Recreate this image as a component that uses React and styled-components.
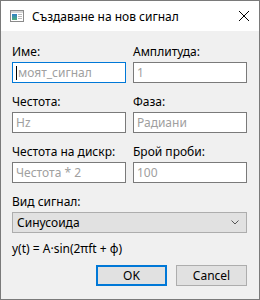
import styled, { createGlobalStyle } from 'styled-components';

const Global = createGlobalStyle`
  html, body {
    margin: 0;
    padding: 0;
    background: #f0f0f0;
  }
  * { box-sizing: border-box; }
`;

const Window = styled.div`
  width: 260px;
  height: 300px;
  display: flex;
  flex-direction: column;
  background: #f0f0f0;
  border: 1px solid #7a7a7a;
  font-family: "Noto Sans", "Open Sans", sans-serif;
  font-size: 12px;
  color: #000;
`;

const TitleBar = styled.div`
  height: 30px;
  flex: none;
  display: flex;
  align-items: center;
  background: #fff;
  padding: 0 9px 0 9px;
`;

const Title = styled.div`
  flex: 1;
  margin-left: 8px;
  font-size: 12px;
`;

const Body = styled.div`
  padding: 13px 12px 0 11px;
  display: flex;
  flex-direction: column;
`;

const Grid = styled.div`
  display: grid;
  grid-template-columns: 1fr 1fr;
  column-gap: 7px;
  row-gap: 11px;
`;

const Field = styled.div`
  display: flex;
  flex-direction: column;
  gap: 2px;
  grid-column: ${(p) => (p.$wide ? '1 / span 2' : 'auto')};
`;

const Label = styled.div`
  line-height: 16px;
  height: 16px;
  white-space: nowrap;
`;

const Input = styled.div`
  height: 21px;
  background: #fff;
  border: 1px solid ${(p) => (p.$focus ? '#0078d7' : '#7a7a7a')};
  display: flex;
  align-items: center;
  padding-left: 3px;
  color: #a0a0a0;
`;

const Caret = styled.span`
  width: 1px;
  height: 14px;
  background: #000;
  margin-right: 1px;
`;

const Combo = styled.div`
  height: 21px;
  background: #e1e1e1;
  border: 1px solid #adadad;
  display: flex;
  align-items: center;
  justify-content: space-between;
  padding: 0 7px 0 4px;
`;

const Formula = styled.div`
  margin-top: 8px;
  line-height: 16px;
`;

const Buttons = styled.div`
  margin-top: 8px;
  display: flex;
  justify-content: flex-end;
  gap: 9px;
`;

const Button = styled.div`
  width: 71px;
  height: 21px;
  display: flex;
  align-items: center;
  justify-content: center;
  background: #e1e1e1;
  border: ${(p) => (p.$default ? '2px solid #0078d7' : '1px solid #adadad')};
`;

const WinIcon = () => (
  <svg width="14" height="12" viewBox="0 0 14 12">
    <defs>
      <linearGradient id="g" x1="0" y1="0" x2="0" y2="1">
        <stop offset="0" stopColor="#2f7fc8" />
        <stop offset="1" stopColor="#4fb07a" />
      </linearGradient>
    </defs>
    <rect x="0.5" y="0.5" width="13" height="11" fill="#fff" stroke="#8a8a8a" />
    <rect x="1" y="1" width="12" height="2" fill="#d6d6d6" />
    <rect x="2" y="4" width="5" height="6" fill="url(#g)" />
    <rect x="8" y="4" width="4" height="1" fill="#bbb" />
    <rect x="8" y="6" width="4" height="1" fill="#bbb" />
    <rect x="8" y="8" width="4" height="1" fill="#bbb" />
  </svg>
);

const CloseIcon = () => (
  <svg width="12" height="12" viewBox="0 0 12 12">
    <path d="M1 1 L11 11 M11 1 L1 11" stroke="#000" strokeWidth="1" />
  </svg>
);

const Chevron = () => (
  <svg width="8" height="5" viewBox="0 0 8 5">
    <path d="M0.5 0.5 L4 4 L7.5 0.5" stroke="#555" strokeWidth="1" fill="none" />
  </svg>
);

const fields = [
  { label: 'Име:', placeholder: 'моят_сигнал', focus: true },
  { label: 'Амплитуда:', placeholder: '1' },
  { label: 'Честота:', placeholder: 'Hz' },
  { label: 'Фаза:', placeholder: 'Радиани' },
  { label: 'Честота на дискр:', placeholder: 'Честота * 2' },
  { label: 'Брой проби:', placeholder: '100' },
];

export default function App() {
  return (
    <>
      <Global />
      <Window>
        <TitleBar>
          <WinIcon />
          <Title>Създаване на нов сигнал</Title>
          <CloseIcon />
        </TitleBar>
        <Body>
          <Grid>
            {fields.map((f) => (
              <Field key={f.label}>
                <Label>{f.label}</Label>
                <Input $focus={f.focus}>
                  {f.focus && <Caret />}
                  {f.placeholder}
                </Input>
              </Field>
            ))}
            <Field $wide>
              <Label>Вид сигнал:</Label>
              <Combo>
                <span>Синусоида</span>
                <Chevron />
              </Combo>
            </Field>
          </Grid>
          <Formula>y(t) = A·sin(2πft + φ)</Formula>
          <Buttons>
            <Button $default>OK</Button>
            <Button>Cancel</Button>
          </Buttons>
        </Body>
      </Window>
    </>
  );
}
